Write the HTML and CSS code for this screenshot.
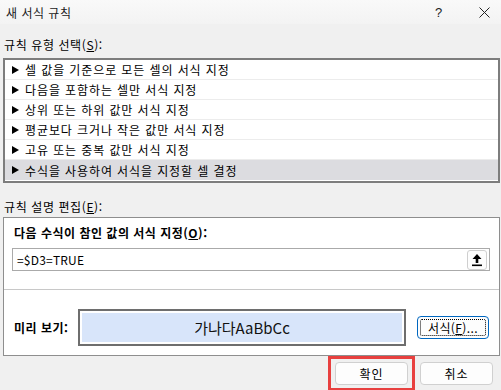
FILE: index.html
```html
<!DOCTYPE html>
<html lang="ko">
<head>
  <meta charset="UTF-8">
  <title>새 서식 규칙</title>
  <link rel="stylesheet" href="styles.css">
</head>
<body>
  <div class="dialog">
    <div class="titlebar">
      <span class="title">새 서식 규칙</span>
      <span class="help">?</span>
      <span class="close">
        <svg width="11" height="11" viewBox="0 0 11 11"><path d="M0.5 0.5 L10.5 10.5 M10.5 0.5 L0.5 10.5" stroke="#222" stroke-width="1"/></svg>
      </span>
    </div>

    <div class="label">규칙 유형 선택(<u>S</u>):</div>
    <ul class="rule-list">
      <li><span class="arrow"></span>셀 값을 기준으로 모든 셀의 서식 지정</li>
      <li><span class="arrow"></span>다음을 포함하는 셀만 서식 지정</li>
      <li><span class="arrow"></span>상위 또는 하위 값만 서식 지정</li>
      <li><span class="arrow"></span>평균보다 크거나 작은 값만 서식 지정</li>
      <li><span class="arrow"></span>고유 또는 중복 값만 서식 지정</li>
      <li class="selected"><span class="arrow"></span>수식을 사용하여 서식을 지정할 셀 결정</li>
    </ul>

    <div class="label label-edit">규칙 설명 편집(<u>E</u>):</div>
    <div class="panel">
      <div class="panel-title">다음 수식이 참인 값의 서식 지정(<u>O</u>):</div>
      <div class="formula">
        <span class="formula-text">=$D3=TRUE</span>
        <span class="collapse-btn">
          <svg width="12" height="14" viewBox="0 0 12 14">
            <path d="M6 1 L10.5 6 L7.3 6 L7.3 10 L4.7 10 L4.7 6 L1.5 6 Z" fill="#000"/>
            <rect x="1" y="11.5" width="10" height="1.6" fill="#000"/>
          </svg>
        </span>
      </div>
      <div class="divider"></div>
      <div class="preview-row">
        <span class="preview-label">미리 보기:</span>
        <div class="preview-box">
          <div class="preview-inner">가나다AaBbCc</div>
        </div>
        <button class="btn btn-focus"><span class="focus-ring">서식(<u>F</u>)...</span></button>
      </div>
    </div>

    <div class="actions">
      <span class="highlight"><button class="btn btn-ok">확인</button></span>
      <button class="btn btn-cancel">취소</button>
    </div>
  </div>
</body>
</html>
```

FILE: styles.css
```css
* {
  margin: 0;
  padding: 0;
  box-sizing: border-box;
}

body {
  width: 501px;
  height: 390px;
  overflow: hidden;
  background: #f0f0f0;
  font-family: "Noto Sans CJK KR", "Noto Sans", sans-serif;
  font-size: 12px;
  color: #000;
}

u {
  text-decoration: underline;
  text-underline-offset: 1px;
}

/* Title bar */
.titlebar {
  display: flex;
  align-items: center;
  height: 24px;
  padding-left: 6px;
  background: linear-gradient(#f9f9f9, #f3f3f3);
}

.title {
  flex: 1;
  font-size: 12px;
  color: #1a1a1a;
  letter-spacing: 0.5px;
}

.help {
  width: 16px;
  margin-right: 28px;
  font-family: "Liberation Sans", sans-serif;
  font-size: 13px;
  color: #222;
}

.close {
  display: flex;
  margin-right: 11px;
}

/* Section labels */
.label {
  height: 14px;
  line-height: 14px;
  margin: 14px 0 0 4px;
  letter-spacing: 0.6px;
}

.label-edit {
  margin-top: 17px;
}

/* Rule type list */
.rule-list {
  list-style: none;
  margin: 6px 1px 0 3px;
  background: #fff;
  border: 2px solid #7d7d7d;
  padding-bottom: 1px;
}

.rule-list li {
  display: flex;
  align-items: center;
  height: 20px;
  padding-left: 7px;
  border-bottom: 1px solid #ececec;
  letter-spacing: 0.9px;
}

.rule-list li.selected {
  background: #dcdce0;
  border-bottom: none;
}

.arrow {
  width: 0;
  height: 0;
  margin-right: 6px;
  border-top: 4px solid transparent;
  border-bottom: 4px solid transparent;
  border-left: 7px solid #000;
}

/* Description panel */
.panel {
  margin: 3px 1px 0 3px;
  height: 139px;
  background: #fff;
  border: 1px solid #8e8e8e;
}

.panel-title {
  height: 14px;
  line-height: 14px;
  margin: 8px 0 0 10px;
  font-weight: 700;
  letter-spacing: 0.5px;
}

.formula {
  display: flex;
  align-items: center;
  justify-content: space-between;
  height: 23px;
  margin: 8px 0 0 8px;
  width: 478px;
  border: 1px solid #aaa;
  padding: 0 2px 0 4px;
}

.formula-text {
  letter-spacing: 0.2px;
}

.collapse-btn {
  display: flex;
  align-items: center;
  justify-content: center;
  width: 20px;
  height: 20px;
  border: 1px solid #cfcfcf;
  border-radius: 3px;
  background: #fdfdfd;
}

.divider {
  height: 1px;
  margin-top: 18px;
  background: #c8c8c8;
}

.preview-row {
  display: flex;
  align-items: center;
  margin-top: 19px;
  padding-left: 10px;
}

.preview-label {
  width: 64px;
  font-weight: 700;
  letter-spacing: 0.5px;
}

.preview-box {
  width: 328px;
  height: 37px;
  border: 2px solid #6e6e6e;
  padding: 2px;
  background: #fff;
}

.preview-inner {
  height: 100%;
  display: flex;
  align-items: center;
  justify-content: center;
  background: #d8e5fa;
  font-size: 15px;
  color: #111;
}

/* Buttons */
.btn {
  font-family: inherit;
  font-size: 12px;
  color: #000;
  background: #fdfdfd;
  border: 1px solid #d0d0d0;
  border-radius: 4px;
  cursor: pointer;
}

.btn-focus {
  margin-left: 11px;
  width: 72px;
  height: 23px;
  border: 1px solid #0067c0;
  padding: 2px;
}

.focus-ring {
  display: flex;
  align-items: center;
  justify-content: center;
  height: 100%;
  border: 1px dotted #000;
  border-radius: 2px;
  letter-spacing: 0.4px;
}

.actions {
  display: flex;
  align-items: flex-start;
  justify-content: flex-end;
  padding-right: 8px;
}

.highlight {
  display: flex;
  border: 3px solid #e8403f;
  padding: 3px 4px;
  margin-right: 5px;
}

.btn-ok,
.btn-cancel {
  width: 73px;
  height: 23px;
  letter-spacing: 1px;
}

.btn-cancel {
  margin-top: 6px;
}
```
